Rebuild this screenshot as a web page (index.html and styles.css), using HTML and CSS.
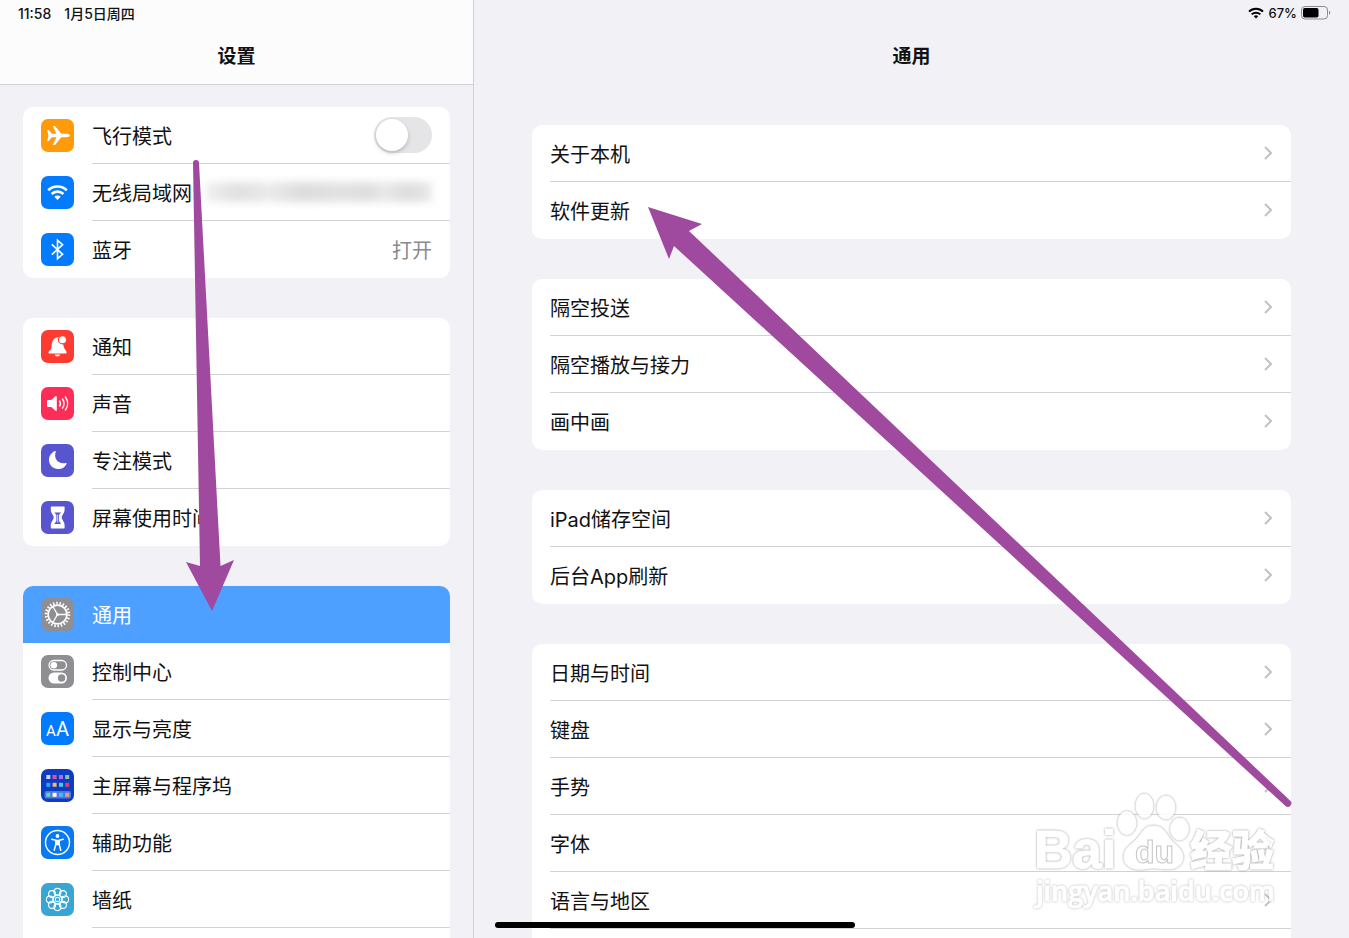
FILE: index.html
```html
<!DOCTYPE html>
<html lang="zh-CN">
<head>
<meta charset="utf-8">
<meta name="viewport" content="width=device-width, initial-scale=1">
<title>设置</title>
<link rel="stylesheet" href="styles.css">
</head>
<body>
<div class="screen">
  <aside class="sidebar">
    <header class="header header-side">
      <div class="status"><span>11:58</span><span>1月5日周四</span></div>
      <h1 class="title">设置</h1>
    </header>
    <nav class="side-groups">
      <div class="card">
        <label class="row" for="airplane">
          <svg class="icon" viewBox="0 0 33 33"><rect width="33" height="33" rx="7" fill="#ff9a0a"/><path d="M6.2 10.9h1.5l3.2 3.9h4.5L11.800 7h2.200l6.300 7.800h5.300c1.800 0 3.200.800 3.200 1.700s-1.400 1.700-3.200 1.700h-5.300L14 26h-2.200l3.600-7.800h-4.500l-3.200 3.900H6.200l1.200-5.600z" fill="#fff"/></svg>
          <span class="body"><span class="text">飞行模式</span><input class="switch" type="checkbox" role="switch" id="airplane"></span>
        </label>
        <a class="row" href="#wifi">
          <svg class="icon" viewBox="0 0 33 33"><rect width="33" height="33" rx="7" fill="#037bfe"/><g fill="none" stroke="#fff" stroke-width="2.600"><path d="M7.200 14.300a13.300 13.300 0 0 1 18.600 0"/><path d="M10.600 18a8.400 8.400 0 0 1 11.800 0"/></g><path d="M13.300 20.800a4.600 4.600 0 0 1 6.400 0L16.500 24z" fill="#fff"/></svg>
          <span class="body"><span class="text">无线局域网</span><span class="masked"></span></span>
        </a>
        <a class="row" href="#bluetooth">
          <svg class="icon" viewBox="0 0 33 33"><rect width="33" height="33" rx="7" fill="#037bfe"/><path d="M10.800 11.300 21.600 21.300 16.500 25.700V7.300l5.100 4.400L10.800 21.700" fill="none" stroke="#fff" stroke-width="1.600"/></svg>
          <span class="body"><span class="text">蓝牙</span><span class="value">打开</span></span>
        </a>
      </div>

      <div class="card">
        <a class="row" href="#notifications">
          <svg class="icon" viewBox="0 0 33 33"><rect width="33" height="33" rx="7" fill="#fd3b30"/><path d="M7.500 22.500c0-1.400 2.700-2 3.100-5.500.400-4.700.9-9 6-9.800 1.600-.300 3 .200 4 .9l1.700 6.400c.400 4.500 3.300 6.200 3.300 8 0 .7-.5 1-1.200 1H8.700c-.7 0-1.200-.300-1.200-1zM13.700 24.600h5.600c-.4 1.300-1.400 2-2.800 2s-2.400-.7-2.800-2z" fill="#fff"/><circle cx="21.500" cy="9.800" r="4.100" fill="#fff" stroke="#fd3b30" stroke-width="1.200"/></svg>
          <span class="body"><span class="text">通知</span></span>
        </a>
        <a class="row" href="#sounds">
          <svg class="icon" viewBox="0 0 33 33"><rect width="33" height="33" rx="7" fill="#fd2d57"/><path d="M6 14.300c0-.8.500-1.300 1.300-1.300h2.900l4.200-3.800c.7-.6 1.400-.3 1.400.5v13.600c0 .8-.7 1.100-1.400.5L10.200 20H7.300c-.8 0-1.300-.5-1.300-1.300z" fill="#fff"/><g fill="none" stroke="#fff" stroke-width="1.500" stroke-linecap="round"><path d="M18.600 14a4.500 4.500 0 0 1 0 5"/><path d="M21.500 12a8 8 0 0 1 0 9"/><path d="M24.400 10a11 11 0 0 1 0 13"/></g></svg>
          <span class="body"><span class="text">声音</span></span>
        </a>
        <a class="row" href="#focus">
          <svg class="icon" viewBox="0 0 33 33"><rect width="33" height="33" rx="7" fill="#5856ce"/><path d="M14.100 7.100c.5-.2.900.2.700.7-2.600 6.700 2.600 13 10.100 11.200.6-.1.900.3.700.8a9.100 9.100 0 0 1-8.500 5.200c-5 0-9.100-4-9.100-9 0-4 2.400-7.500 6.100-8.900z" fill="#fff"/></svg>
          <span class="body"><span class="text">专注模式</span></span>
        </a>
        <a class="row" href="#screentime">
          <svg class="icon" viewBox="0 0 33 33"><rect width="33" height="33" rx="7" fill="#5856ce"/><path d="M10.500 6.300h12.400v2.600c0 3.700-2.900 4.700-2.900 7.600s2.900 3.900 2.900 7.600v2.600H10.500v-2.600c0-3.700 2.900-4.700 2.900-7.600s-2.900-3.900-2.900-7.600z" fill="#fff" stroke="#fff" stroke-width="1.400" stroke-linejoin="round"/><path d="M13.400 11.600h6.600c-.4 1-2 1.500-2 2.800v5.400c0 1 1.600 1.800 2 3.200h-6.600c.4-1.400 2-2.200 2-3.200v-5.400c0-1.300-1.600-1.800-2-2.800z" fill="#5856ce"/><path d="M16.700 13.500v8" stroke="#fff" stroke-width=".8"/></svg>
          <span class="body"><span class="text">屏幕使用时间</span></span>
        </a>
      </div>

      <div class="card card-open">
        <a class="row row-selected" href="#general" aria-current="page">
          <svg class="icon" viewBox="0 0 33 33"><rect width="33" height="33" rx="7" fill="#8e8e93"/><g fill="none" stroke="#fff"><circle cx="16.500" cy="16.500" r="11.400" stroke-width="2.800" stroke-dasharray="1.500 1.756" /><circle cx="16.500" cy="16.500" r="9.400" stroke-width="1.700"/><path d="M16.500 16.500h9M16.500 16.500 12 8.700M16.500 16.500 12 24.300" stroke-width="1.300"/></g><circle cx="16.500" cy="16.500" r="1.500" fill="#fff"/></svg>
          <span class="body"><span class="text">通用</span></span>
        </a>
        <a class="row" href="#control">
          <svg class="icon" viewBox="0 0 33 33"><rect width="33" height="33" rx="7" fill="#8e8e93"/><rect x="8" y="5.500" width="17.500" height="9.500" rx="4.750" fill="none" stroke="#fff" stroke-width="1.300"/><circle cx="12.800" cy="10.200" r="3.300" fill="#fff"/><rect x="7.500" y="17.500" width="18.500" height="11" rx="5.500" fill="#fff"/><circle cx="20.600" cy="23" r="3.700" fill="#8e8e93"/></svg>
          <span class="body"><span class="text">控制中心</span></span>
        </a>
        <a class="row" href="#display">
          <svg class="icon icon-letters" viewBox="0 0 33 33"><rect width="33" height="33" rx="7" fill="#037bfe"/><text x="5" y="24" font-size="15">A</text><text x="15" y="24" font-size="20">A</text></svg>
          <span class="body"><span class="text">显示与亮度</span></span>
        </a>
        <a class="row" href="#home">
          <svg class="icon" viewBox="0 0 33 33"><rect width="33" height="33" rx="7" fill="#0c3cc4"/><rect x="3.500" y="22" width="26.500" height="7.500" rx="2" fill="#5278dc"/><path fill="#c9dcff" d="M5.300 6h4v4h-4z"/><path fill="#e9508f" d="M11.600 6h4v4h-4z"/><path fill="#b06bf8" d="M18 6h4v4h-4z"/><path fill="#8fc6a1" d="M24.200 6h4v4h-4z"/><path fill="#2ea4f6" d="M5.300 13.800h4v4h-4z"/><path fill="#f0bd68" d="M11.600 13.800h4v4h-4z"/><path fill="#54c9e2" d="M18 13.800h4v4h-4z"/><path fill="#e23c70" d="M24.200 13.800h4v4h-4z"/><path fill="#5dd8b0" d="M5.300 23.800h4v4h-4z"/><path fill="#fff" d="M11.600 23.800h4v4h-4z"/><path fill="#43baff" d="M18 23.800h4v4h-4z"/><path fill="#e29f86" d="M24.200 23.800h4v4h-4z"/></svg>
          <span class="body"><span class="text">主屏幕与程序坞</span></span>
        </a>
        <a class="row" href="#accessibility">
          <svg class="icon" viewBox="0 0 33 33"><rect width="33" height="33" rx="7" fill="#0879ee"/><circle cx="16.500" cy="16.500" r="12" fill="none" stroke="#fff" stroke-width="1.400"/><circle cx="16.500" cy="10" r="1.900" fill="#fff"/><path d="m10.800 13.300 4 .9v4.300L13.200 24.200M22.200 13.300l-4 .9v4.300l1.600 5.700" fill="none" stroke="#fff" stroke-width="1.500" stroke-linecap="round" stroke-linejoin="round"/><path d="M14.300 13.800h4.400v5.400h-4.400z" fill="#fff"/></svg>
          <span class="body"><span class="text">辅助功能</span></span>
        </a>
        <a class="row" href="#wallpaper">
          <svg class="icon" viewBox="0 0 33 33"><rect width="33" height="33" rx="7" fill="#38a5d3"/><g fill="none" stroke="#fff" stroke-width="1.100"><circle cx="16.500" cy="8.900" r="3.500"/><circle cx="21.900" cy="11.100" r="3.500"/><circle cx="24.100" cy="16.500" r="3.500"/><circle cx="21.900" cy="21.900" r="3.500"/><circle cx="16.500" cy="24.100" r="3.500"/><circle cx="11.100" cy="21.900" r="3.500"/><circle cx="8.900" cy="16.500" r="3.500"/><circle cx="11.100" cy="11.100" r="3.500"/><circle cx="16.500" cy="16.500" r="4.700"/><circle cx="16.500" cy="16.500" r="2.200"/></g></svg>
          <span class="body"><span class="text">墙纸</span></span>
        </a>
      </div>
    </nav>
  </aside>

  <main class="detail">
    <header class="header">
      <div class="status status-end">
        <svg class="wifi" viewBox="0 0 16 12"><g fill="none" stroke="#000" stroke-width="2"><path d="M1 4.600a10 10 0 0 1 14 0"/><path d="M3.700 7.400a6.100 6.100 0 0 1 8.600 0"/></g><path d="M5.800 9.300a3.200 3.200 0 0 1 4.400 0L8 11.600z"/></svg>
        <span>67%</span>
        <svg class="battery" viewBox="0 0 30 14"><rect x=".5" y=".5" width="26" height="12.500" rx="3.500" fill="none" stroke="#8b8b8f"/><rect x="2" y="2" width="15.500" height="9.500" rx="1.800"/><path d="M28 4.800c1.800.6 1.800 3.300 0 3.900z" fill="#8b8b8f"/></svg>
      </div>
      <h2 class="title">通用</h2>
    </header>
    <div class="detail-groups">
      <div class="card">
        <a class="row" href="#about"><span class="body"><span class="text">关于本机</span><svg class="chevron" viewBox="0 0 8 14"><path d="m1 1 6 6-6 6"/></svg></span></a>
        <a class="row" href="#update"><span class="body"><span class="text">软件更新</span><svg class="chevron" viewBox="0 0 8 14"><path d="m1 1 6 6-6 6"/></svg></span></a>
      </div>
      <div class="card">
        <a class="row" href="#airdrop"><span class="body"><span class="text">隔空投送</span><svg class="chevron" viewBox="0 0 8 14"><path d="m1 1 6 6-6 6"/></svg></span></a>
        <a class="row" href="#airplay"><span class="body"><span class="text">隔空播放与接力</span><svg class="chevron" viewBox="0 0 8 14"><path d="m1 1 6 6-6 6"/></svg></span></a>
        <a class="row" href="#pip"><span class="body"><span class="text">画中画</span><svg class="chevron" viewBox="0 0 8 14"><path d="m1 1 6 6-6 6"/></svg></span></a>
      </div>
      <div class="card">
        <a class="row" href="#storage"><span class="body"><span class="text">iPad储存空间</span><svg class="chevron" viewBox="0 0 8 14"><path d="m1 1 6 6-6 6"/></svg></span></a>
        <a class="row" href="#refresh"><span class="body"><span class="text">后台App刷新</span><svg class="chevron" viewBox="0 0 8 14"><path d="m1 1 6 6-6 6"/></svg></span></a>
      </div>
      <div class="card card-open">
        <a class="row" href="#date"><span class="body"><span class="text">日期与时间</span><svg class="chevron" viewBox="0 0 8 14"><path d="m1 1 6 6-6 6"/></svg></span></a>
        <a class="row" href="#keyboard"><span class="body"><span class="text">键盘</span><svg class="chevron" viewBox="0 0 8 14"><path d="m1 1 6 6-6 6"/></svg></span></a>
        <a class="row" href="#gestures"><span class="body"><span class="text">手势</span><svg class="chevron" viewBox="0 0 8 14"><path d="m1 1 6 6-6 6"/></svg></span></a>
        <a class="row" href="#fonts"><span class="body"><span class="text">字体</span><svg class="chevron" viewBox="0 0 8 14"><path d="m1 1 6 6-6 6"/></svg></span></a>
        <a class="row" href="#language"><span class="body"><span class="text">语言与地区</span><svg class="chevron" viewBox="0 0 8 14"><path d="m1 1 6 6-6 6"/></svg></span></a>
      </div>
    </div>
    <div class="home-bar"></div>
  </main>

  <svg class="watermark" viewBox="0 0 260 130">
    <text class="mark mark-bai" x="4" y="83">Bai</text>
    <g class="mark">
      <ellipse cx="97" cy="38" rx="9" ry="11.500"/>
      <ellipse cx="114.500" cy="21" rx="8.500" ry="12"/>
      <ellipse cx="136" cy="22.500" rx="9" ry="11.500"/>
      <ellipse cx="149.500" cy="44" rx="9" ry="11"/>
      <path d="M123 41c10 0 13 7 17 13 6 7 13 10 13 19-1 8-8 11-15 11-6 0-10-1-15-1s-11 2-17 1c-7-1-12-5-12-12 0-9 7-12 13-18 5-6 7-13 16-13z"/>
    </g>
    <text class="mark mark-cjk" x="160" y="81">经验</text>
    <text class="mark-du" x="105" y="78">du</text>
    <text class="mark mark-light mark-url" x="6" y="116">jingyan.baidu.com</text>
  </svg>

  <svg class="arrows" width="1349" height="938" viewBox="0 0 1349 938" aria-hidden="true">
    <path d="M193 163a3 3 0 0 1 6 0L220.500 566 234 560 212 611 186 562 200 566z"/>
    <path d="M648 207 702 224 689 231 1290 800.500a3.500 3.500 0 0 1-4.500 5.500L674 246 669 259z"/>
  </svg>
</div>
</body>
</html>
```

FILE: styles.css
```css
* {
  box-sizing: border-box;
}

body {
  margin: 0;
  background: #f1f1f6;
  color: #111;
  font-family: Inter, "Noto Sans CJK SC", sans-serif;
  font-size: 20px;
}

.screen {
  position: relative;
  display: grid;
  grid-template-columns: minmax(320px, 474px) 1fr;
  height: 100vh;
  overflow: hidden;
}

.sidebar,
.detail {
  display: flex;
  flex-direction: column;
  min-height: 0;
  overflow: hidden;
}

.sidebar {
  border-right: 1px solid #d0d0d5;
}

.detail {
  position: relative;
}

.header {
  flex: none;
  border-bottom: 1px solid transparent;
}

.header-side {
  background: #fcfcfc;
  border-color: #cfcfd4;
}

.status {
  display: flex;
  align-items: center;
  gap: 13px;
  height: 26px;
  padding: 0 18px;
  font-size: 14px;
  font-weight: 500;
}

.status-end {
  justify-content: flex-end;
  gap: 4px;
}

.status-end span {
  font-size: 13px;
}

.wifi {
  width: 16px;
  height: 12px;
}

.battery {
  width: 30px;
  height: 14px;
}

.title {
  margin: 0;
  padding-top: 4px;
  font-size: 19px;
  font-weight: 700;
  line-height: 54px;
  text-align: center;
}

.side-groups,
.detail-groups {
  flex: 1;
  display: flex;
  flex-direction: column;
  gap: 40px;
  min-height: 0;
}

.side-groups {
  padding: 22px 23px 0;
}

.detail-groups {
  padding: 40px 58px 0;
}

.card {
  flex: none;
  border-radius: 10px;
  background: #fff;
  overflow: hidden;
}

.card-open {
  flex: 1 0 auto;
  border-radius: 10px 10px 0 0;
}

.row {
  display: flex;
  align-items: center;
  gap: 18px;
  height: 57px;
  padding-left: 18px;
  color: inherit;
  text-decoration: none;
}

.icon {
  flex: none;
  width: 33px;
  height: 33px;
}

.icon-letters text {
  fill: #fff;
  font-family: Roboto, sans-serif;
}

.body {
  flex: 1;
  display: flex;
  align-items: center;
  justify-content: space-between;
  height: 57px;
  padding-right: 18px;
  border-bottom: 1px solid #d2d2d5;
}

.card:not(.card-open) .row:last-child .body,
.row-selected .body {
  border-color: transparent;
}

.row-selected {
  background: #4da0ff;
  color: #fff;
}

.value {
  color: #8a8a8e;
}

.masked {
  width: 226px;
  height: 20px;
  background: linear-gradient(90deg, #f0f0f0, #e0e0e0 14%, #ebebeb 28%, #dcdcdc 42%, #e2e2e2 60%, #dedede 72%, #e9e9e9 78%, #dddddd 90%, #eaeaea);
  filter: blur(4px);
}

.switch {
  appearance: none;
  width: 58px;
  height: 36px;
  margin: 0;
  padding: 2px;
  border-radius: 18px;
  background: #e5e5e7;
}

.switch::before {
  content: "";
  display: block;
  width: 32px;
  height: 32px;
  border-radius: 50%;
  background: #fff;
  box-shadow: 0 2px 4px rgba(0, 0, 0, 0.2);
}

.switch:checked {
  background: #34c759;
}

.switch:checked::before {
  margin-left: auto;
}

.detail .body {
  padding-right: 19px;
}

.chevron {
  width: 8px;
  height: 14px;
  fill: none;
  stroke: #c2c2c5;
  stroke-width: 2;
}

.home-bar {
  position: absolute;
  left: 21px;
  bottom: 10px;
  width: 360px;
  height: 6px;
  border-radius: 3px;
  background: #000;
}

.watermark {
  position: absolute;
  right: 59px;
  bottom: 23px;
  width: 260px;
  height: 130px;
  opacity: 0.85;
  pointer-events: none;
}

.mark {
  fill: #fff;
  stroke: #fff;
  stroke-width: 1;
  filter: drop-shadow(0 0 1px #888);
}

.mark-light {
  filter: drop-shadow(0 0 1px #aaa);
}

.mark-bai {
  font: 700 53px "Liberation Sans", sans-serif;
}

.mark-du {
  fill: #fff;
  stroke: #bbb;
  stroke-width: 1;
  font: 700 32px "Liberation Sans", sans-serif;
}

.mark-cjk {
  font: 900 42px "Noto Sans CJK SC", sans-serif;
}

.mark-url {
  font: 600 27px "Open Sans", sans-serif;
}

.arrows {
  position: absolute;
  top: 0;
  left: 0;
  fill: #a04a9f;
  pointer-events: none;
}
```
